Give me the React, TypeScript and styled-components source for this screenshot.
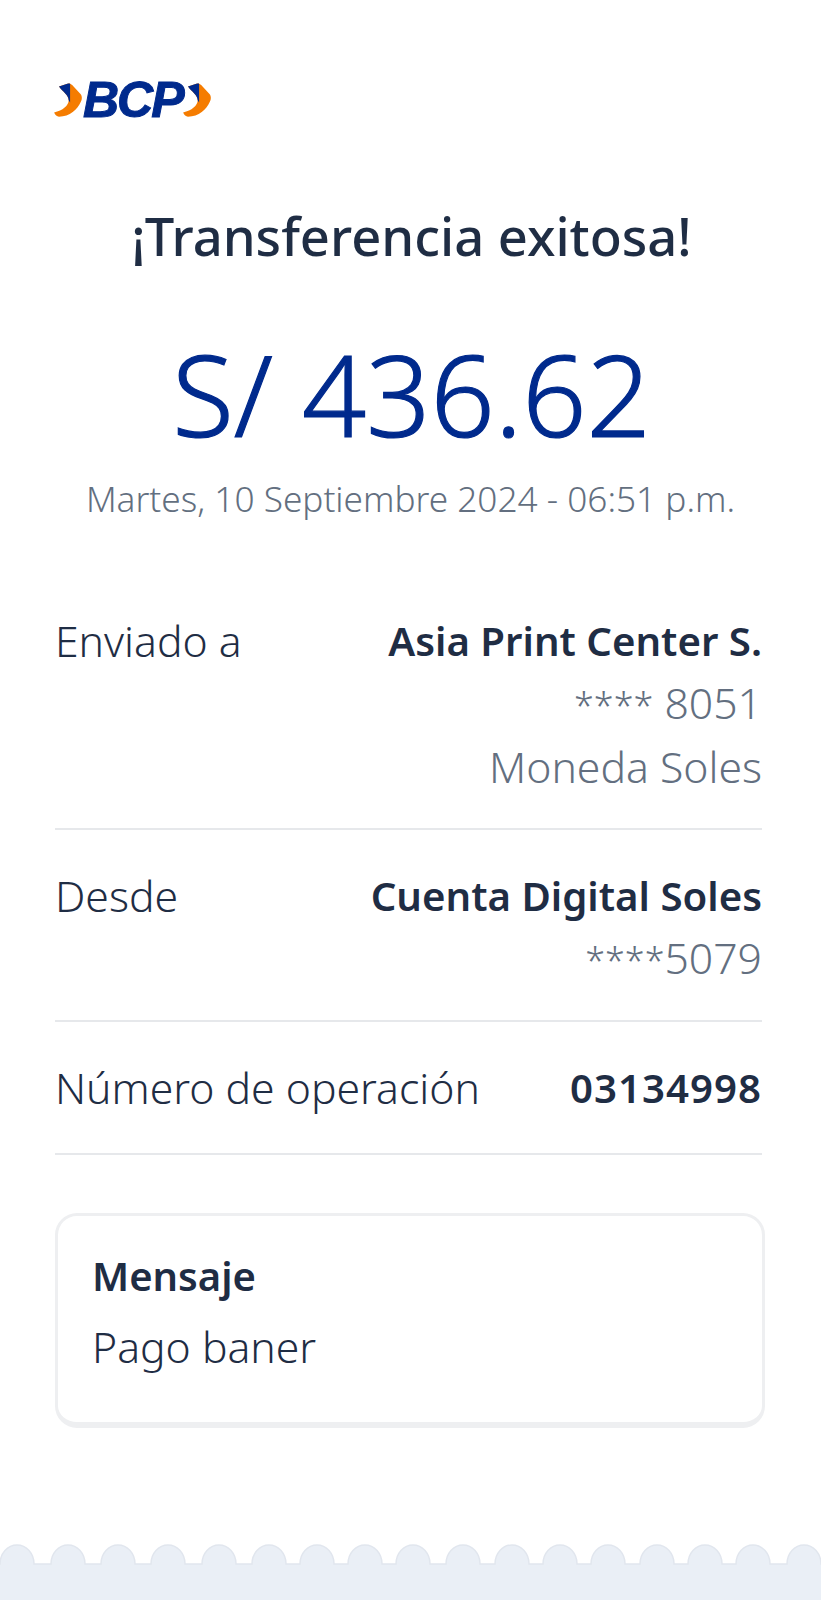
import React from "react";
import styled, { createGlobalStyle } from "styled-components";

const Global = createGlobalStyle`
  html, body { margin: 0; padding: 0; background: #fff; }
  body { font-family: "Noto Sans", "Open Sans", sans-serif; }
`;
const Page = styled.div`
  width: 821px; height: 1600px; display: flex; flex-direction: column; background: #fff; overflow: hidden;
`;
const Content = styled.main`
  flex: 1; padding: 72px 59px 0 55px; display: flex; flex-direction: column;
`;
const LogoRow = styled.div`
  display: flex; align-items: center; height: 56px; margin-left: -1px;
`;
const LogoText = styled.span`
  font-family: "Liberation Sans", sans-serif; font-weight: 700; font-style: italic;
  font-size: 50px; line-height: 56px; color: #002a8d; letter-spacing: -2px; margin: 0 0 0 1px;
  -webkit-text-stroke: 1px #002a8d;
`;
const Title = styled.h1`
  margin: 78px 0 0; padding-left: 6px; text-align: center; font-size: 52.5px; line-height: 60px; font-weight: 500; color: #1f2d44; white-space: nowrap;
`;
const Amount = styled.div`
  margin-top: 60px; padding-left: 6px; text-align: center; font-size: 112.5px; line-height: 136px; font-weight: 300; color: #002a8d; white-space: nowrap;
  -webkit-text-stroke: 1.2px #002a8d;
`;
const DateLine = styled.div`
  margin-top: 13px; padding-left: 4px; text-align: center; font-size: 35.2px; line-height: 46px; font-weight: 300; color: #636f80; white-space: nowrap;
`;
const Rows = styled.section`
  margin-top: 54px;
`;
const Row = styled.div<{ $h: number }>`
  display: flex; justify-content: space-between; height: ${p => p.$h}px; padding-top: 35px; box-sizing: border-box;
  border-bottom: 2px solid #e6e8eb; font-size: 42.7px; line-height: 61.5px;
`;
const Label = styled.span`color: #1f2d44; font-weight: 300;`;
const Values = styled.div`text-align: right; white-space: nowrap;`;
const Strong = styled.div<{ $spaced?: boolean }>`
  font-size: 40.2px; font-weight: 600; color: #1f2d44; letter-spacing: ${p => (p.$spaced ? "1px" : "0")};
`;
const Muted = styled.div`color: #636f80; font-weight: 300;`;
const Stars = styled.span`font-size: 36px;`;
const Card = styled.section`
  margin-top: 58px; height: 215px; box-sizing: border-box; width: 710px; padding: 32px 34px;
  border: 3px solid #eeeff1; border-bottom-width: 6px; border-radius: 22px;
`;
const CardTitle = styled.div`font-size: 40px; line-height: 56px; font-weight: 600; color: #1f2d44;`;
const CardText = styled.div`margin-top: 15px; font-size: 42.7px; line-height: 56px; font-weight: 300; color: #1f2d44;`;
const Footer = styled.svg`display: block; flex: none;`;

const Chevron = () => (
  <svg width="28" height="34" viewBox="0 0 80 98">
    <path d="M14 10L38 2C44 0 48 2 52 6L76 32C81 38 81 46 77 54C68 76 45 97 14 97C8 97 3 92 0 85C25 80 42 65 42 50C42 35 25 25 14 10Z" fill="#f57c00" />
    <path d="M14 10L38 2C42 1 45 1 46 2V56L42 50C42 35 25 25 14 10Z" fill="#002a8d" />
  </svg>
);

const bumps = [17, 68, 118, 168, 219, 269, 317, 365, 413, 463, 512, 560, 608, 657, 705, 753, 804];

export default function App() {
  return (
    <Page>
      <Global />
      <Content>
        <LogoRow>
          <Chevron />
          <LogoText>BCP</LogoText>
          <Chevron />
        </LogoRow>
        <Title>¡Transferencia exitosa!</Title>
        <Amount>S/ 436.62</Amount>
        <DateLine>Martes, 10 Septiembre 2024 - 06:51 p.m.</DateLine>
        <Rows>
          <Row $h={255}>
            <Label>Enviado a</Label>
            <Values>
              <Strong>Asia Print Center S.</Strong>
              <Muted><Stars>****</Stars> 8051</Muted>
              <Muted>Moneda Soles</Muted>
            </Values>
          </Row>
          <Row $h={192}>
            <Label>Desde</Label>
            <Values>
              <Strong>Cuenta Digital Soles</Strong>
              <Muted><Stars>****</Stars>5079</Muted>
            </Values>
          </Row>
          <Row $h={133}>
            <Label>Número de operación</Label>
            <Values><Strong $spaced>03134998</Strong></Values>
          </Row>
        </Rows>
        <Card>
          <CardTitle>Mensaje</CardTitle>
          <CardText>Pago baner</CardText>
        </Card>
      </Content>
      <Footer width="821" height="56" viewBox="0 0 821 56">
        <path
          d={`M-5 20 ` + bumps.map(c => `H${c - 17} A17 19 0 0 1 ${c + 17} 20`).join(" ") + ` H826 V60 H-5 Z`}
          fill="#eaeff6" stroke="#e1e6ee" strokeWidth="1.5"
        />
      </Footer>
    </Page>
  );
}
